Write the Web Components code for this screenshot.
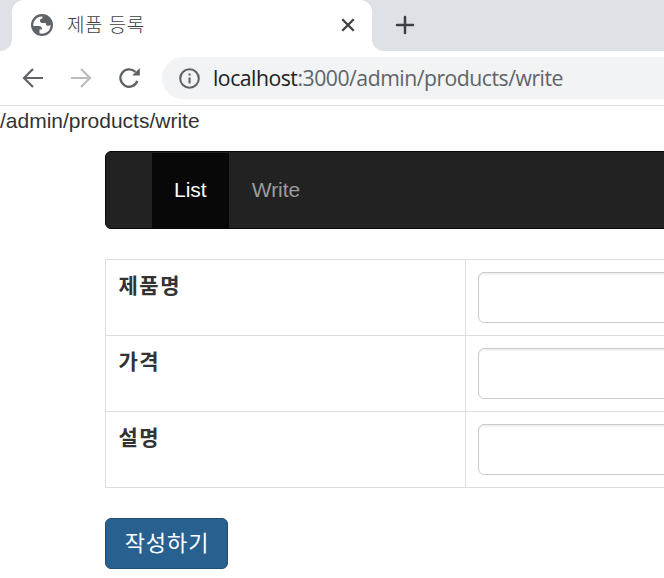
<!DOCTYPE html>
<html lang="ko">
<head>
<meta charset="utf-8">
<title>제품 등록</title>
<style>
html,body{margin:0;height:100%;overflow:hidden;background:#fff}
body{font-family:"Liberation Sans","Noto Sans CJK KR",sans-serif;color:#333;font-size:21px}
</style>
</head>
<body>
<browser-tabs><span>제품 등록</span></browser-tabs>
<browser-toolbar><span slot="host">localhost</span><span slot="path">:3000/admin/products/write</span></browser-toolbar>
<admin-page>
  <span slot="path">/admin/products/write</span>
  <nav-bar><nav-item active>List</nav-item><nav-item>Write</nav-item></nav-bar>
  <form-table>
    <form-row>제품명</form-row>
    <form-row>가격</form-row>
    <form-row>설명</form-row>
  </form-table>
  <primary-button>작성하기</primary-button>
</admin-page>
<script>
const define = (name, html) => customElements.define(name, class extends HTMLElement {
  constructor() {
    super();
    this.attachShadow({ mode: "open" }).innerHTML = html;
  }
});

define("browser-tabs", `<style>
:host{display:flex;height:51px;background:#fff;color:#3c4043}
.edge{width:12px;background:#dee1e6;border-bottom-right-radius:12px}
.mid{flex:0 0 360px;background:#dee1e6}
.tab{height:51px;box-sizing:border-box;background:#fff;border-radius:12px 12px 0 0;display:flex;align-items:center;padding:0 15px 2px 19px}
.tab svg{flex:none}
.label{flex:1;margin-left:14px;padding-bottom:1px;font:300 19px/24px "Noto Sans CJK KR",sans-serif;white-space:pre;letter-spacing:.500px}
.rest{flex:1;background:#dee1e6;border-bottom-left-radius:12px;padding:15px 0 0 23px}
svg{display:block}
</style>
<div class="edge"></div>
<div class="mid"><div class="tab">
<svg width="22" height="22" viewBox="0 0 22 22"><circle cx="11" cy="11" r="11" fill="#5f6368"/><path fill="#fff" d="M11.500 2.400C8 2.200 4.600 4 3 7.600C2.300 9.300 2.200 10.600 2.400 12L7.800 12C9.700 12 10.900 13 10.900 14.400V15.400H8.500V19.300C10.800 20 13.700 19.600 15.700 18.300C18.400 16.600 19.800 13.800 19.600 10.700C18.900 11.500 18.300 11.800 17.300 11.800C15.700 11.800 14.800 11 14.800 9.400V8.900H11.200C9.700 8.900 9 8 9 6.700C9 5.300 9.700 4.700 11.300 4.700Z"/></svg>
<span class="label"><slot></slot></span>
<svg width="18" height="18" viewBox="0 0 18 18" fill="none" stroke="#3c4043" stroke-width="2.300"><path d="M3.300 3.300 14.700 14.700M14.700 3.300 3.300 14.700"/></svg>
</div></div>
<div class="rest"><svg width="20" height="20" viewBox="0 0 20 20" fill="none" stroke="#3c4043" stroke-width="2.500" stroke-linecap="round"><path d="M10 2V18M2 10H18"/></svg></div>`);

define("browser-toolbar", `<style>
:host{display:flex;height:55px;box-sizing:border-box;border-bottom:1px solid #dadce0;background:#fff;align-items:center}
svg{display:block;flex:none}
.back{margin-left:22px}.fwd{margin-left:26px}.reload{margin-left:27px}
.box{flex:1;height:42px;margin-left:20px;border-radius:21px 0 0 21px;background:#f1f3f4;display:flex;align-items:center;padding-left:17px;box-sizing:border-box}
.url{margin-left:13px;font:21.200px/30px "Open Sans","Noto Sans",sans-serif;letter-spacing:-.48px;color:#5f6368;white-space:nowrap}
.host{color:#202124}
</style>
<svg class="back" width="22" height="22" viewBox="0 0 22 22" fill="none" stroke="#5f6368" stroke-width="2.200"><path d="M21 11H3M11 2 2 11 11 20"/></svg>
<svg class="fwd" width="22" height="22" viewBox="0 0 22 22" fill="none" stroke="#babcbe" stroke-width="2.200"><path d="M1 11H19M11 2 20 11 11 20"/></svg>
<svg class="reload" width="23" height="22" viewBox="0 0 23 22"><path d="M18.300 14A8.700 8.700 0 1 1 16.400 5" fill="none" stroke="#5f6368" stroke-width="2.300"/><path fill="#5f6368" d="M20.800 1V8.500H13.200Z"/></svg>
<div class="box"><svg width="21" height="21" viewBox="0 0 21 21"><circle cx="10.500" cy="10.500" r="9.300" fill="none" stroke="#5f6368" stroke-width="2.100"/><path d="M9.500 5.500h2.100v2.100H9.500zM9.500 9.400h2.100v6.100H9.500z" fill="#5f6368"/></svg>
<div class="url"><span class="host"><slot name="host"></slot></span><slot name="path"></slot></div></div>`);

define("admin-page", `<style>
:host{display:block;width:664px;overflow:hidden}
.path{height:30px;line-height:30px;font-size:21px;white-space:nowrap}
.content{padding:15px 0 0 105px}
</style><div class="path"><slot name="path"></slot></div><div class="content"><slot></slot></div>`);

define("nav-bar", `<style>
:host{display:flex;width:900px;height:78px;box-sizing:border-box;background:#222;border:1px solid #080808;border-radius:6px;padding:1px 0 0 46px}
</style><slot></slot>`);

define("nav-item", `<style>
:host{display:flex;align-items:center;padding:0 22px 1px 23px;color:#9d9d9d;font-size:21px}
:host([active]){background:#080808;color:#fff;padding:0 22px 1px}
</style><slot></slot>`);

define("form-table", `<style>
:host{display:block;width:900px;margin-top:30px;border:1px solid #ddd;border-bottom:0;box-sizing:border-box}
</style><slot></slot>`);

define("form-row", `<style>
:host{display:grid;grid-template-columns:360px 1fr;height:76px;box-sizing:border-box;border-bottom:1px solid #ddd}
.name{border-right:1px solid #ddd;box-sizing:border-box;padding:9px 12.500px;font:700 21px/30px "Noto Sans CJK KR",sans-serif;letter-spacing:1.500px}
.value{padding:12px}
input{display:block;width:100%;height:51px;box-sizing:border-box;border:1px solid #ccc;border-radius:6px;background:#fff;box-shadow:inset 0 1.500px 1.500px rgba(0,0,0,.075);padding:9px 18px}
</style><div class="name"><slot></slot></div><div class="value"><input aria-label="value"></div>`);

define("primary-button", `<style>
:host{display:block;margin-top:30px}
button{display:block;width:123px;height:51px;padding:0 0 6px 1px;border:1px solid #204d74;border-radius:6px;background:#286090;color:#fff;font:400 22px/30px "Noto Sans CJK KR",sans-serif;letter-spacing:.900px;white-space:nowrap}
</style><button type="button"><slot></slot></button>`);
</script>
</body>
</html>
